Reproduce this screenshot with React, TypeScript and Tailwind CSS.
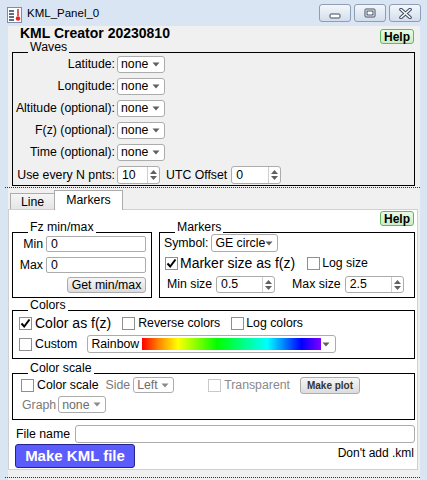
import type { ReactNode } from "react";

const WAVE_ROWS = ["Latitude:", "Longitude:", "Altitude (optional):", "F(z) (optional):", "Time (optional):"];

function Arrow({ dim }: { dim?: boolean }) {
  return (
    <svg width="8" height="5" viewBox="0 0 8 5" className="shrink-0">
      <path d="M0.5 0.5 H7.5 L4 4.5 Z" fill={dim ? "#8a8a8a" : "#5f5f5f"} />
    </svg>
  );
}

function Select({ value, className, dim }: { value: string; className: string; dim?: boolean }) {
  return (
    <div
      className={`flex items-center justify-between rounded-[3px] border border-[#acacac] bg-white pl-[3px] pr-[4px] text-[12.3px] leading-none shrink-0 ${
        dim ? "text-[#6d6d6d]" : "text-black"
      } ${className}`}
    >
      <span>{value}</span>
      <Arrow dim={dim} />
    </div>
  );
}

function Spinner({ value, className }: { value: string; className: string }) {
  return (
    <div className={`flex items-stretch rounded-[3px] border border-[#acacac] bg-white text-[12.3px] leading-none shrink-0 ${className}`}>
      <span className="flex-1 flex items-center pl-[4px]">{value}</span>
      <span className="w-[12px] border-l border-[#cfcfcf] flex flex-col items-center justify-center gap-[2px]">
        <svg width="7" height="4" viewBox="0 0 7 4">
          <path d="M0 4 L3.5 0 L7 4 Z" fill="#606060" />
        </svg>
        <svg width="7" height="4" viewBox="0 0 7 4">
          <path d="M0 0 L3.5 4 L7 0 Z" fill="#606060" />
        </svg>
      </span>
    </div>
  );
}

function Check({ on, disabled }: { on?: boolean; disabled?: boolean }) {
  return (
    <span
      className={`w-[13px] h-[13px] border bg-white flex items-center justify-center shrink-0 ${
        disabled ? "border-[#c9c9c9]" : "border-[#8e8f8f]"
      }`}
    >
      {on && (
        <svg width="11" height="11" viewBox="0 0 11 11">
          <path d="M1.5 5.5 L4.2 8.5 L9.5 1.5" fill="none" stroke="#000" strokeWidth="2" />
        </svg>
      )}
    </span>
  );
}

function Group({ title, bg, className, children }: { title: string; bg: string; className: string; children: ReactNode }) {
  return (
    <div className={`flex flex-col border border-black ${className}`}>
      <span className={`self-start -mt-[12px] ml-[15px] px-[2px] text-[12.3px] leading-[13px] ${bg}`}>{title}</span>
      {children}
    </div>
  );
}

function HelpButton() {
  return (
    <div className="w-[34px] h-[15px] flex items-center justify-center rounded-[3px] border border-[#62b862] bg-gradient-to-b from-[#e6fbe3] to-[#c9efc5] text-[12px] font-bold leading-none">
      Help
    </div>
  );
}

function WinButton({ children }: { children: ReactNode }) {
  return (
    <div className="w-[32px] h-[18px] rounded-[3px] border border-[#8d9db3] bg-gradient-to-b from-[#f4f7fb] to-[#d3deec] flex items-center justify-center">
      {children}
    </div>
  );
}

export default function App() {
  return (
    <div className="w-[427px] h-[480px] bg-[#dae5f3] flex flex-col overflow-hidden font-['Liberation_Sans',Arial,sans-serif] text-black">
      {/* Title bar */}
      <div className="h-[26px] shrink-0 flex items-start">
        <svg width="15" height="16" viewBox="0 0 15 16" className="ml-[7px] mt-[7px]">
          <rect x="0.5" y="0.5" width="14" height="15" fill="#fff" stroke="#7d8ea8" />
          <path d="M2 4 H7 M2 7 H7 M2 10 H7 M2 13 H7" stroke="#2c3e66" strokeWidth="1.4" />
          <path d="M11 2 V9" stroke="#d22" strokeWidth="1.5" />
          <circle cx="11" cy="11.5" r="2.2" fill="#e22" />
        </svg>
        <span className="ml-[5px] mt-[6px] text-[11.5px] leading-[14px]">KML_Panel_0</span>
        <div className="flex-1" />
        <div className="mt-[4px] mr-[6px] flex gap-[3px]">
          <WinButton>
            <svg width="12" height="6" viewBox="0 0 12 6" className="mt-[5px]">
              <rect x="1" y="1" width="10" height="4" rx="1" fill="#fff" stroke="#3a4a63" />
            </svg>
          </WinButton>
          <WinButton>
            <svg width="12" height="10" viewBox="0 0 12 10">
              <rect x="1" y="1" width="10" height="8" rx="1" fill="#fff" stroke="#3a4a63" />
              <rect x="3" y="3" width="6" height="4" fill="none" stroke="#3a4a63" />
            </svg>
          </WinButton>
          <WinButton>
            <svg width="13" height="11" viewBox="0 0 13 11">
              <path d="M2 1.5 L11 9.5 M11 1.5 L2 9.5" stroke="#3a4a63" strokeWidth="3.6" strokeLinecap="round" />
              <path d="M2 1.5 L11 9.5 M11 1.5 L2 9.5" stroke="#fff" strokeWidth="1.6" strokeLinecap="round" />
            </svg>
          </WinButton>
        </div>
      </div>

      {/* Client area */}
      <div className="ml-[8px] mr-[7px] flex-1 bg-[#f0f0f0] flex flex-col text-[12.3px]">
        <div className="h-[18px] flex items-start">
          <span className="ml-[12px] mt-[1px] text-[14px] font-bold leading-[13px]">KML Creator 20230810</span>
          <div className="flex-1" />
          <div className="mt-[3px] mr-[6px]">
            <HelpButton />
          </div>
        </div>

        <Group title="Waves" bg="bg-[#f0f0f0]" className="mt-[8px] ml-[4px] mr-[5px]">
          <div className="mt-[2px] pb-[1px] flex flex-col gap-[5px]">
            {WAVE_ROWS.map((label) => (
              <div key={label} className="h-[17px] flex items-center">
                <span className="w-[102px] text-right">{label}</span>
                <Select value="none" className="ml-[2px] w-[48px] h-[17px]" />
              </div>
            ))}
            <div className="h-[18px] flex items-center">
              <span className="w-[102px] text-right">Use every N pnts:</span>
              <Spinner value="10" className="ml-[2px] w-[43px] h-[18px]" />
              <span className="ml-[6px]">UTC Offset</span>
              <Spinner value="0" className="ml-[4px] w-[50px] h-[18px]" />
            </div>
          </div>
        </Group>

        <div className="mt-[1px] -ml-[3px] border-t border-dotted border-[#333]" />

        {/* Tabs */}
        <div className="mt-[2px] h-[20px] flex items-end pl-[2px]">
          <div className="w-[45px] h-[17px] border border-b-0 border-[#acacac] bg-gradient-to-b from-[#f5f5f5] to-[#e4e4e4] flex items-center justify-center">
            Line
          </div>
          <div className="relative z-10 -ml-[1px] w-[69px] h-[20px] border border-b-0 border-[#acacac] bg-white flex items-center justify-center">
            Markers
          </div>
        </div>

        <div className="-mt-[1px] mr-[2px] border border-[#d0d0d0] bg-white flex flex-col">
          <div className="flex justify-end pt-[1px] pr-[3px]">
            <HelpButton />
          </div>

          <div className="mt-[6px] ml-[3px] mr-[2px] flex gap-[7px]">
            <Group title="Fz min/max" bg="bg-white" className="w-[140px]">
              <div className="mt-[2px] h-[16px] flex items-center">
                <span className="w-[30px] text-right">Min</span>
                <div className="ml-[3px] w-[100px] h-[16px] rounded-[2px] border border-[#acacac] flex items-center pl-[4px]">0</div>
              </div>
              <div className="mt-[5px] h-[16px] flex items-center">
                <span className="w-[30px] text-right">Max</span>
                <div className="ml-[3px] w-[100px] h-[16px] rounded-[2px] border border-[#acacac] flex items-center pl-[4px]">0</div>
              </div>
              <div className="mt-[4px] pb-[4px] flex justify-end pr-[5px]">
                <div className="w-[79px] h-[16px] rounded-[3px] border border-[#acacac] bg-gradient-to-b from-[#f6f6f6] to-[#dcdcdc] flex items-center justify-center">
                  Get min/max
                </div>
              </div>
            </Group>

            <Group title="Markers" bg="bg-white" className="flex-1">
              <div className="h-[18px] flex items-center pl-[4px]">
                <span>Symbol:</span>
                <Select value="GE circle" className="ml-[3px] w-[67px] h-[18px]" />
              </div>
              <div className="mt-[3px] h-[17px] flex items-center pl-[5px]">
                <Check on />
                <span className="ml-[2px] text-[14px]">Marker size as f(z)</span>
                <span className="ml-[12px]">
                  <Check />
                </span>
                <span className="ml-[2px]">Log size</span>
              </div>
              <div className="mt-[4px] pb-[4px] h-[21px] flex items-start pl-[7px]">
                <span className="leading-[17px]">Min size</span>
                <Spinner value="0.5" className="ml-[4px] w-[59px] h-[17px]" />
                <span className="ml-[17px] leading-[17px]">Max size</span>
                <Spinner value="2.5" className="ml-[4px] w-[59px] h-[17px]" />
              </div>
            </Group>
          </div>

          <Group title="Colors" bg="bg-white" className="mt-[12px] ml-[3px] mr-[2px]">
            <div className="mt-[3px] h-[17px] flex items-center pl-[6px]">
              <Check on />
              <span className="ml-[3px] text-[14px]">Color as f(z)</span>
              <span className="ml-[11px]">
                <Check />
              </span>
              <span className="ml-[3px]">Reverse colors</span>
              <span className="ml-[11px]">
                <Check />
              </span>
              <span className="ml-[2px]">Log colors</span>
            </div>
            <div className="mt-[3px] pb-[5px] flex items-center pl-[6px]">
              <Check />
              <span className="ml-[3px]">Custom</span>
              <div className="ml-[10px] w-[249px] h-[18px] rounded-[3px] border border-[#acacac] bg-white flex items-center pl-[3px] pr-[5px]">
                <span>Rainbow</span>
                <span className="ml-[3px] w-[179px] h-[12px] bg-[linear-gradient(to_right,#ff0000,#ff8000_9%,#ffff00_20%,#00ff00_42%,#00ffff_70%,#0000ff_89%,#8000ff)]" />
                <div className="flex-1" />
                <Arrow />
              </div>
            </div>
          </Group>

          <Group title="Color scale" bg="bg-white" className="mt-[14px] ml-[3px] mr-[2px]">
            <div className="mt-[1px] h-[18px] flex items-center pl-[8px]">
              <Check />
              <span className="ml-[3px]">Color scale</span>
              <span className="ml-[7px] text-[#7a7a7a]">Side</span>
              <Select value="Left" dim className="ml-[3px] w-[41px] h-[16px]" />
              <span className="ml-[34px]">
                <Check disabled />
              </span>
              <span className="ml-[3px] text-[#8a8a8a]">Transparent</span>
              <div className="ml-[10px] w-[60px] h-[17px] rounded-[3px] border border-[#acacac] bg-gradient-to-b from-[#f6f6f6] to-[#dcdcdc] flex items-center justify-center text-[10px] font-bold text-[#333]">
                Make plot
              </div>
            </div>
            <div className="mt-[2px] pb-[5px] h-[23px] flex items-start pl-[9px]">
              <span className="leading-[18px] text-[#7a7a7a]">Graph</span>
              <Select value="none" dim className="ml-[2px] w-[48px] h-[17px]" />
            </div>
          </Group>

          <div className="mt-[5px] h-[18px] flex items-center pl-[7px] pr-[2px]">
            <span>File name</span>
            <div className="ml-[5px] flex-1 h-[18px] rounded-[3px] border border-[#acacac] bg-white" />
          </div>

          <div className="mt-[1px] pb-[1px] flex items-start justify-between pl-[6px] pr-[3px]">
            <div className="w-[120px] h-[24px] rounded-[3px] border border-[#23238f] bg-[#5c5cfd] flex items-center justify-center text-[15px] font-bold text-white">
              Make KML file
            </div>
            <span className="mt-[2px] leading-[14px] text-[12px]">Don&apos;t add .kml</span>
          </div>
        </div>

        <div className="mt-[7px] -ml-[3px] border-t border-dotted border-[#333]" />
      </div>
    </div>
  );
}
